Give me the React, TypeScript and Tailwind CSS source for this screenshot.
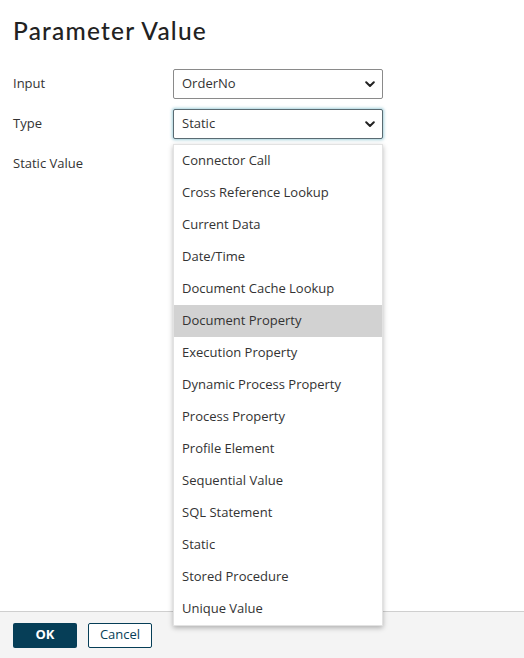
import { useState } from "react";

const types = [
  "Connector Call",
  "Cross Reference Lookup",
  "Current Data",
  "Date/Time",
  "Document Cache Lookup",
  "Document Property",
  "Execution Property",
  "Dynamic Process Property",
  "Process Property",
  "Profile Element",
  "Sequential Value",
  "SQL Statement",
  "Static",
  "Stored Procedure",
  "Unique Value",
];

function Chevron() {
  return (
    <svg width="10" height="7" viewBox="0 0 10 7" className="text-[#222]">
      <path d="M1.2 1.3 L5 5 L8.8 1.3" fill="none" stroke="currentColor" strokeWidth="2" strokeLinecap="round" strokeLinejoin="round" />
    </svg>
  );
}

function FakeSelect({ value, focused }: { value: string; focused?: boolean }) {
  return (
    <div
      className={
        "h-[30px] w-[210px] flex items-center justify-between pl-[8px] pr-[7px] bg-white rounded-[2px] border text-[13px] text-[#333] " +
        (focused
          ? "border-[#5a6b72] shadow-[0_0_3px_1px_rgba(90,170,190,0.55)]"
          : "border-[#8a8a8a]")
      }
    >
      <span>{value}</span>
      <Chevron />
    </div>
  );
}

export default function App() {
  const [hovered, setHovered] = useState("Document Property");

  return (
    <div
      className="h-[658px] w-[524px] flex flex-col bg-white text-[#333]"
      style={{ fontFamily: '"Open Sans", "Liberation Sans", sans-serif' }}
    >
      <div className="flex-1 px-[13px] pt-[15px]">
        <h1
          className="text-[24.5px] leading-[32px] font-medium text-[#222] tracking-[1.2px]"
          style={{ fontFamily: 'Lato, "Open Sans", sans-serif' }}
        >
          Parameter Value
        </h1>

        <div className="mt-[22px] grid grid-cols-[160px_210px] gap-y-[10px] text-[13px]">
          <div className="h-[30px] flex items-center">Input</div>
          <FakeSelect value="OrderNo" />

          <div className="h-[30px] flex items-center">Type</div>
          <div className="relative">
            <FakeSelect value="Static" focused />
            <ul className="absolute left-0 top-[35px] z-10 w-[210px] bg-white border border-[#e2e2e2] shadow-[0_2px_5px_rgba(0,0,0,0.28)]">
              {types.map((t) => (
                <li
                  key={t}
                  onMouseEnter={() => setHovered(t)}
                  className={
                    "h-[32px] flex items-center pl-[8px] text-[13px] text-[#333] " +
                    (hovered === t ? "bg-[#d2d2d2]" : "bg-white")
                  }
                >
                  {t}
                </li>
              ))}
            </ul>
          </div>

          <div className="h-[30px] flex items-center">Static Value</div>
          <div />
        </div>
      </div>

      <div className="h-[47px] border-t border-[#cfcfcf] bg-[#f4f4f4] flex items-center gap-[11px] px-[13px]">
        <button className="h-[25px] w-[64px] rounded-[2px] bg-[#063e57] text-white text-[13px] font-bold">
          OK
        </button>
        <button className="h-[25px] w-[64px] rounded-[2px] bg-white border border-[#063e57] text-[#063e57] text-[13px]">
          Cancel
        </button>
      </div>
    </div>
  );
}
